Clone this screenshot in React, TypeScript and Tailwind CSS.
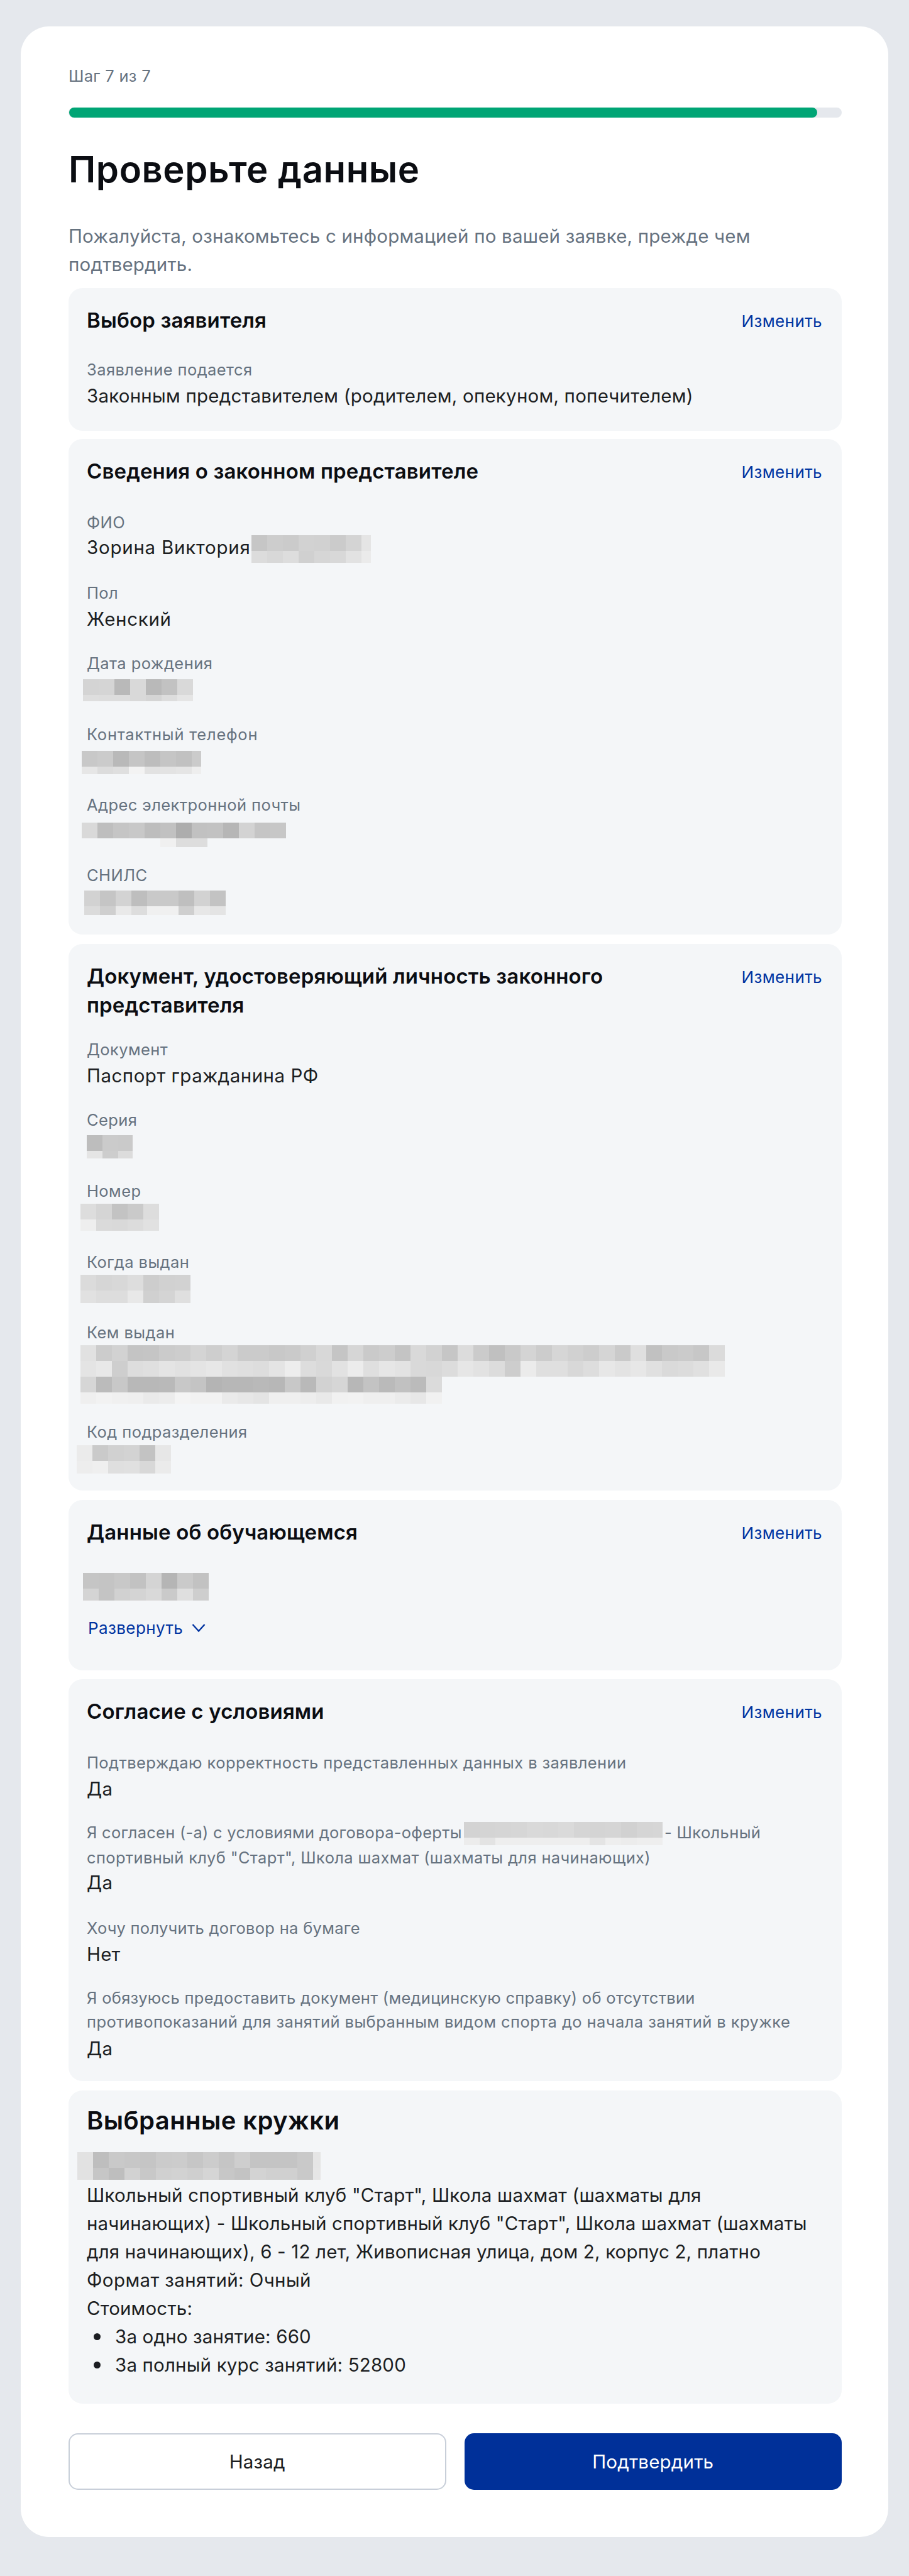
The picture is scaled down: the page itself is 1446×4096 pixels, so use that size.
import type { ReactNode } from "react";
import clsx from "clsx";

type Field = {
  label: ReactNode;
  value: ReactNode;
  className?: string;
  labelClassName?: string;
  valueClassName?: string;
};

/* ================= MOSAIC ================= */
const CELL = 25;

type MosaicProps = {
  // one string of space separated grey levels per row, "--" leaves a cell empty
  rows: string[];
  lastRow: number;
  width: number;
  className?: string;
};

const Mosaic = ({ rows, lastRow, width, className }: MosaicProps) => {
  return (
    <div className={clsx("shrink-0 overflow-hidden", className)} style={{ width }}>
      {rows.map((row, i) => (
        <div
          key={i}
          className="flex"
          style={{ height: i === rows.length - 1 ? lastRow : CELL }}
        >
          {row.split(" ").map((level, j) => (
            <div
              key={j}
              className="w-[25px] shrink-0"
              style={{
                backgroundColor: level === "--" ? undefined : `#${level.repeat(3)}`,
              }}
            />
          ))}
        </div>
      ))}
    </div>
  );
};

/* ================= DATA ================= */
const applicantFields: Field[] = [
  {
    label: "Заявление подается",
    value: "Законным представителем (родителем, опекуном, попечителем)",
  },
];

const parentFields: Field[] = [
  {
    label: "ФИО",
    value: (
      <div className="flex">
        <span className="w-[262px] whitespace-nowrap tracking-[0.75px]">Зорина Виктория</span>
        <Mosaic
          className="mt-[3px]"
          width={190}
          lastRow={19}
          rows={["c6 cd cb d2 d1 cb d4 e5", "dc d8 dd d0 d6 d8 e2 eb"]}
        />
      </div>
    ),
    valueClassName: "-mt-[2px] mb-[2px]",
  },
  { label: "Пол", value: "Женский", valueClassName: "tracking-[0.7px]" },
  {
    label: "Дата рождения",
    value: (
      <Mosaic
        className="-ml-[6px] mt-[6px]"
        width={175}
        lastRow={10}
        rows={["d4 d5 b9 d9 b9 c2 d9", "de dd dd d9 d5 dd e5"]}
      />
    ),
  },
  {
    label: "Контактный телефон",
    value: (
      <Mosaic
        className="-ml-[8px] mt-[7px]"
        width={190}
        lastRow={12}
        rows={["c8 cb b9 c5 bd c5 c1 cb", "e6 dc df f3 e2 e3 e5 ee"]}
      />
    ),
    labelClassName: "leading-[38px] tracking-[0.75px]",
  },
  {
    label: "Адрес электронной почты",
    value: (
      <Mosaic
        className="-ml-[8px] mt-[9px]"
        width={325}
        lastRow={14}
        rows={[
          "d9 be c5 c8 bd c1 ad c1 c2 b6 d3 c5 c7",
          "-- -- -- -- -- f0 dd dd -- -- -- -- --",
        ]}
      />
    ),
  },
  {
    label: "СНИЛС",
    value: (
      <Mosaic
        className="-ml-[4px] mt-[5px]"
        width={225}
        lastRow={14}
        rows={["d2 c5 d3 be c9 c9 bf d2 c3", "db cf e9 dd f0 f0 cf e7 e4"]}
      />
    ),
  },
];

const documentFields: Field[] = [
  {
    label: "Документ",
    value: "Паспорт гражданина РФ",
    valueClassName: "tracking-[0.5px]",
  },
  {
    label: "Серия",
    value: (
      <Mosaic
        className="mt-[5px]"
        width={73}
        lastRow={12}
        rows={["bd cb ca", "e5 cd dc"]}
      />
    ),
    className: "-mt-px mb-px",
  },
  {
    label: "Номер",
    value: (
      <Mosaic
        className="-ml-[10px] mt-px"
        width={125}
        lastRow={18}
        rows={["dd d5 c3 ca dd", "ee da d9 dc e1"]}
      />
    ),
  },
  {
    label: "Когда выдан",
    value: (
      <Mosaic
        className="-ml-[10px] mt-px"
        width={175}
        lastRow={20}
        rows={["db d6 d8 dd cd d1 d2", "e1 dd dd e8 d0 d4 df"]}
      />
    ),
  },
  {
    label: "Кем выдан",
    value: (
      <Mosaic
        className="-ml-[10px] mt-px"
        width={1025}
        lastRow={18}
        rows={[
          "e1 cc d2 c4 c5 cb cd d4 ce d4 cb cb c8 ca d0 d8 c5 d6 ca cd c4 d9 d2 c6 dc cb c0 c9 d4 cc d6 d1 cd d5 ca df c1 c9 cb c7 db",
          "e4 e8 ce dd df e4 e1 e4 e7 e1 df dd e4 ed dd d9 e2 ec df e6 e3 d9 d8 dc e6 e2 dc cd eb df df d8 dd e7 e3 e7 e0 da dc e0 e9",
          "d6 bb c8 b8 b8 b9 c8 c4 b4 b7 b7 b9 b7 c8 b9 d2 d6 b7 c3 ba c1 bb db",
          "ef f2 f0 ef ea ec f4 f2 f2 ea e7 e4 ef ef ed e9 f1 f2 ef ef eb e7 f1",
        ]}
      />
    ),
    valueClassName: "h-[90px]",
  },
  {
    label: "Код подразделения",
    value: (
      <Mosaic
        className="-ml-[16px] mt-[2px]"
        width={150}
        lastRow={20}
        rows={["eb ca d1 d3 c3 e7", "ed ef df e0 d8 eb"]}
      />
    ),
  },
];

const agreementFields: Field[] = [
  {
    label: "Подтверждаю корректность представленных данных в заявлении",
    value: "Да",
  },
  {
    label: (
      <>
        <div className="flex">
          <span className="w-[600px] whitespace-nowrap tracking-[0.25px]">
            Я согласен (-а) с условиями договора-оферты
          </span>
          <Mosaic
            className="mt-[3px]"
            width={316}
            lastRow={12}
            rows={[
              "d3 d4 d5 d6 d9 d8 da d5 d4 d5 d1 d5 d6",
              "ec e3 ee ee ee ee ee ee e4 ee ec ee ee",
            ]}
          />
          <span className="ml-[3px]">- Школьный</span>
        </div>
        <div>спортивный клуб "Старт", Школа шахмат (шахматы для начинающих)</div>
      </>
    ),
    value: "Да",
    className: "-mt-px",
    labelClassName: "leading-[39px] tracking-[0.35px]",
    valueClassName: "-mt-[2px]",
  },
  {
    label: "Хочу получить договор на бумаге",
    value: "Нет",
    className: "mt-[3px]",
    labelClassName: "leading-[38px] tracking-[0.3px]",
  },
  {
    label: (
      <>
        <span className="tracking-[0.3px]">
          Я обязуюсь предоставить документ (медицинскую справку) об отсутствии
        </span>
        <br />
        противопоказаний для занятий выбранным видом спорта до начала занятий в кружке
      </>
    ),
    value: "Да",
    valueClassName: "mt-px",
  },
];

/* ================= CARD ================= */
const FieldList = ({ fields, className }: { fields: Field[]; className?: string }) => (
  <dl className={clsx("flex flex-col", className)}>
    {fields.map((field, index) => (
      <div key={index} className={field.className}>
        <dt
          className={clsx(
            "text-[25.5px] text-[#66727f] whitespace-nowrap",
            field.labelClassName ?? "leading-[38px]",
            !field.labelClassName?.includes("tracking") && "tracking-[0.42px]",
          )}
        >
          {field.label}
        </dt>
        <dd
          className={clsx(
            "flow-root text-[29.5px] leading-[45px]",
            !field.valueClassName?.includes("h-[90px]") && "h-[45px]",
            !field.valueClassName?.includes("tracking") && "tracking-[0.22px]",
            field.valueClassName,
          )}
        >
          {field.value}
        </dd>
      </div>
    ))}
  </dl>
);

type CardProps = { title: ReactNode; className: string; children: ReactNode };

const Card = ({ title, className, children }: CardProps) => {
  return (
    <section className={clsx("rounded-[22px] bg-[#f4f6f8] pl-[29px] pr-[31px] pt-7", className)}>
      <div className="flex items-start justify-between">
        <h2 className="text-[33px] font-semibold leading-[46px] tracking-[0.15px] text-[#0b0d12]">
          {title}
        </h2>
        <a className="text-[26px] leading-[49px] tracking-[0.4px] text-[#0033a0]">Изменить</a>
      </div>
      {children}
    </section>
  );
};

export default function App() {
  return (
    <div className="h-[4096px] w-[1446px] bg-[#e5e8ed] px-[33px] pt-[42px] font-['Inter',sans-serif] text-[#1c1e22]">
      <main className="h-[3992px] rounded-[45px] bg-white pl-[76px] pr-[74px] pt-[60px]">
        <p className="text-[25.5px] leading-[38px] tracking-[0.3px] text-[#66727f]">Шаг 7 из 7</p>
        <div className="mt-[31px] h-4 rounded-full bg-[#e5e8ed] pl-px">
          <div className="h-4 w-[1190px] rounded-full bg-[#00a575]" />
        </div>
        <h1 className="mt-[47px] text-[58px] font-semibold leading-[70px] tracking-[0.6px] text-[#0b0d12]">
          Проверьте данные
        </h1>
        <p className="mt-[49px] text-[29.5px] leading-[45px] tracking-[0.2px] text-[#66727f]">
          Пожалуйста, ознакомьтесь с информацией по вашей заявке, прежде чем
          <br />
          подтвердить.
        </p>

        <Card title="Выбор заявителя" className="mt-[15px] h-[227px]">
          <FieldList fields={applicantFields} className="mt-[34px]" />
        </Card>

        <Card title="Сведения о законном представителе" className="mt-[13px] h-[788px]">
          <FieldList fields={parentFields} className="mt-[37px] gap-[29.2px]" />
        </Card>

        <Card
          title={
            <>
              Документ, удостоверяющий личность законного
              <br />
              представителя
            </>
          }
          className="mt-[15px] h-[869px]"
        >
          <FieldList fields={documentFields} className="mt-[29px] gap-[29.5px]" />
        </Card>

        <Card title="Данные об обучающемся" className="mt-[15px] h-[271px]">
          <Mosaic
            className="-ml-[6px] mt-[39px]"
            width={200}
            lastRow={19}
            rows={["c5 c4 c8 c2 d4 b5 ca c2", "d4 c4 d1 d4 d9 ca df ce"]}
          />
          <a className="ml-[2px] mt-[25px] flex items-center text-[26px] leading-[38px] tracking-[0.4px] text-[#0033a0]">
            Развернуть
            <svg
              className="ml-[14px]"
              width="22"
              height="14"
              viewBox="0 0 22 14"
              fill="none"
              stroke="currentColor"
              strokeWidth="2.4"
            >
              <path d="M1.5 1 L11 11.5 L20.5 1" />
            </svg>
          </a>
        </Card>

        <Card title="Согласие с условиями" className="mt-[14px] h-[639px]">
          <FieldList fields={agreementFields} className="mt-[37px] gap-7" />
        </Card>

        <section className="mt-[15px] h-[498px] rounded-[22px] bg-[#f4f6f8] pl-[29px] pr-7 pt-5">
          <h2 className="text-[40px] font-semibold leading-[56px] tracking-[0.4px] text-[#0b0d12]">
            Выбранные кружки
          </h2>
          <Mosaic
            className="-ml-[15px] mt-[22px]"
            width={387}
            lastRow={19}
            rows={[
              "e2 be c9 c7 c5 cb cc c6 cc c5 ce c4 c4 c4 c9 e5",
              "e2 c6 be d2 c8 d0 d2 cf d5 c7 c3 d3 d0 d0 c9 e6",
            ]}
          />
          <div className="mt-[2px] whitespace-nowrap text-[29.5px] leading-[45px] tracking-[0.17px]">
            <p>
              Школьный спортивный клуб "Старт", Школа шахмат (шахматы для
              <br />
              начинающих) - Школьный спортивный клуб "Старт", Школа шахмат (шахматы
              <br />
              для начинающих), 6 - 12 лет, Живописная улица, дом 2, корпус 2, платно
            </p>
            <p className="tracking-[0.4px]">Формат занятий: Очный</p>
            <p>Стоимость:</p>
            <ul>
              {["За одно занятие: 660", "За полный курс занятий: 52800"].map((item) => (
                <li key={item} className="flex items-center">
                  <span className="ml-[11px] mr-[23px] size-[11px] rounded-full bg-[#1c1e22]" />
                  {item}
                </li>
              ))}
            </ul>
          </div>
        </section>

        <div className="mt-[47px] grid grid-cols-2 gap-[29px] text-[29.5px] tracking-[0.2px]">
          <button className="h-[90px] rounded-[15px] border-2 border-[#c8cfd9] bg-white">
            Назад
          </button>
          <button className="h-[90px] rounded-[15px] bg-[#003099] text-white">
            Подтвердить
          </button>
        </div>
      </main>
    </div>
  );
}
